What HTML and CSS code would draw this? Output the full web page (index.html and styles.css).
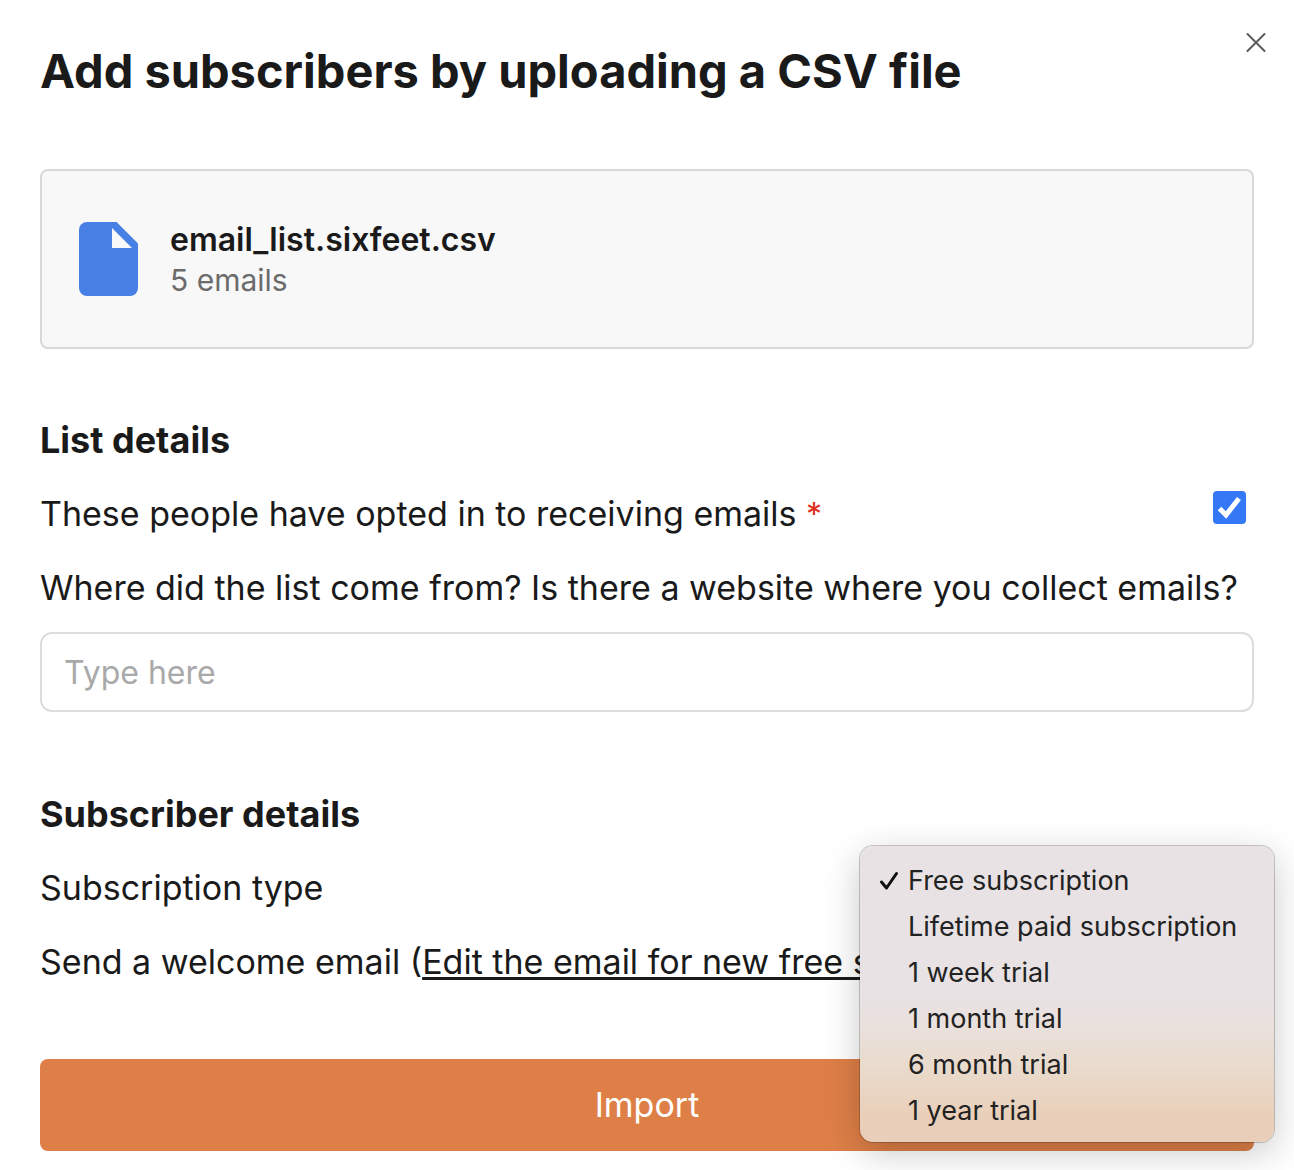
FILE: index.html
```html
<!DOCTYPE html>
<html lang="en">

<head>
    <meta charset="UTF-8">
    <meta name="viewport" content="width=device-width, initial-scale=1.0">
    <title>Add subscribers</title>
    <link rel="stylesheet" href="styles.css">
</head>

<body>
    <div class="modal">
        <button class="close" type="button" aria-label="Close">
            <svg viewBox="0 0 20 20" width="20" height="20">
                <path d="M1.5 2l17 17M18.5 2l-17 17" />
            </svg>
        </button>
        <h1>Add subscribers by uploading a CSV file</h1>

        <div class="file">
            <svg class="file-icon" viewBox="0 0 59 74" width="59" height="74">
                <path fill="#477fe4" d="M8 0h29.500L59 21.500V66a8 8 0 0 1-8 8H8a8 8 0 0 1-8-8V8a8 8 0 0 1 8-8z" />
                <path fill="#f8f8f8" d="M33 6v20h20z" />
            </svg>
            <div class="file-info">
                <div class="file-name">email_list.sixfeet.csv</div>
                <div class="file-count">5 emails</div>
            </div>
        </div>

        <form>
            <h2>List details</h2>
            <div class="row">
                <label for="opted">These people have opted in to receiving emails <span class="required">*</span></label>
                <span class="check">
                    <input type="checkbox" id="opted" checked>
                    <svg viewBox="0 0 33 33" width="33" height="33">
                        <path d="M6.500 17.500l6.500 6.500L26 7.500" />
                    </svg>
                </span>
            </div>
            <div class="row">
                <label for="source">Where did the list come from? Is there a website where you collect emails?</label>
            </div>
            <input class="text" type="text" id="source" placeholder="Type here">

            <h2>Subscriber details</h2>
            <div class="row">
                <label for="type">Subscription type</label>
                <div class="menu">
                    <select id="type" size="6">
                        <option selected>Free subscription</option>
                        <option>Lifetime paid subscription</option>
                        <option>1 week trial</option>
                        <option>1 month trial</option>
                        <option>6 month trial</option>
                        <option>1 year trial</option>
                    </select>
                    <svg class="tick" viewBox="0 0 20 20" width="20" height="20">
                        <path d="M2.500 11l5 6L17.500 2.500" />
                    </svg>
                </div>
            </div>
            <div class="row">
                <span class="welcome">Send a welcome email (<a href="#">Edit the email for new free subscribers</a>)</span>
            </div>
            <button class="import" type="submit">Import</button>
        </form>
    </div>
</body>

</html>
```

FILE: styles.css
```css
* {
    margin: 0;
    padding: 0;
    box-sizing: border-box;
}

body {
    font-family: Inter, "Liberation Sans", sans-serif;
    font-size: 34px;
    line-height: 44px;
    color: #1a1a1a;
    background: #fff;
}

.modal {
    position: relative;
    padding: 40px 40px 19px;
    overflow: hidden;
}

.close {
    position: absolute;
    top: 32px;
    right: 28px;
    width: 20px;
    height: 20px;
    border: none;
    background: none;
    cursor: pointer;
}

svg {
    display: block;
    fill: none;
}

.close svg {
    stroke: #5c5c5c;
    stroke-width: 2;
    stroke-linecap: round;
}

h1 {
    font-size: 47px;
    line-height: 62px;
    font-weight: 700;
}

h2 {
    font-size: 36px;
    line-height: 44px;
    font-weight: 700;
}

.file {
    display: flex;
    align-items: center;
    gap: 32px;
    height: 180px;
    margin: 67px 0 69px;
    padding: 0 37px;
    border: 2px solid #d8d8d8;
    border-radius: 8px;
    background: #f8f8f8;
}

.file-info {
    padding-top: 2px;
}

.file-name {
    font-size: 32px;
    line-height: 40px;
    font-weight: 600;
}

.file-count {
    font-size: 30px;
    line-height: 40px;
    color: #6b6b6b;
}

.row {
    position: relative;
    display: flex;
    justify-content: space-between;
    margin-top: 30px;
    white-space: nowrap;
}

.required {
    color: #e0301e;
    font-size: 32px;
    line-height: 32px;
}

.check {
    position: relative;
    width: 33px;
    height: 33px;
    margin: -1px 8px 0 0;
}

.check input {
    display: block;
    width: 33px;
    height: 33px;
    appearance: none;
    border-radius: 4px;
    background: #3478f6;
}

.check svg {
    position: absolute;
    top: 0;
    left: 0;
    pointer-events: none;
    stroke: #fff;
    stroke-width: 5;
}

.text {
    display: block;
    width: 100%;
    height: 80px;
    margin: 22px 0 80px;
    padding: 0 22px;
    border: 2px solid #dcdcdc;
    border-radius: 12px;
    background: #fff;
    font: inherit;
    font-size: 32px;
}

.text::placeholder {
    color: #a9a9a9;
}

/* open drop-down */
.menu {
    position: absolute;
    top: -20px;
    right: -20px;
    z-index: 1;
    width: 414px;
    height: 296px;
    padding: 18px 0 2px;
    border-radius: 13px;
    background: linear-gradient(#e8e2e4 50%, #eae1dd 60%, #e9dbcd 74%, #e9cfb9 92%);
    box-shadow: 0 0 0 1px rgba(0, 0, 0, .2), 0 10px 36px rgba(0, 0, 0, .22);
}

.menu select {
    display: block;
    width: 100%;
    height: 276px;
    appearance: none;
    border: none;
    outline: none;
    overflow: hidden;
    background: none;
    font: inherit;
    font-size: 27px;
}

.menu option {
    min-height: 46px;
    padding: 0 0 0 48px;
    line-height: 46px;
    color: #222;
}

.menu option:checked {
    background-image: linear-gradient(#e8e2e4, #e8e2e4);
}

.tick {
    position: absolute;
    top: 25px;
    left: 19px;
    pointer-events: none;
    stroke: #111;
    stroke-width: 3;
    stroke-linecap: round;
    stroke-linejoin: round;
}

.welcome a {
    color: inherit;
    text-decoration-thickness: 3px;
    text-underline-offset: 3px;
    text-decoration-skip-ink: none;
}

.import {
    display: block;
    width: 100%;
    height: 92px;
    margin-top: 75px;
    border: none;
    border-radius: 8px;
    background: #de7f47;
    color: #fff;
    font: inherit;
    cursor: pointer;
}
```
